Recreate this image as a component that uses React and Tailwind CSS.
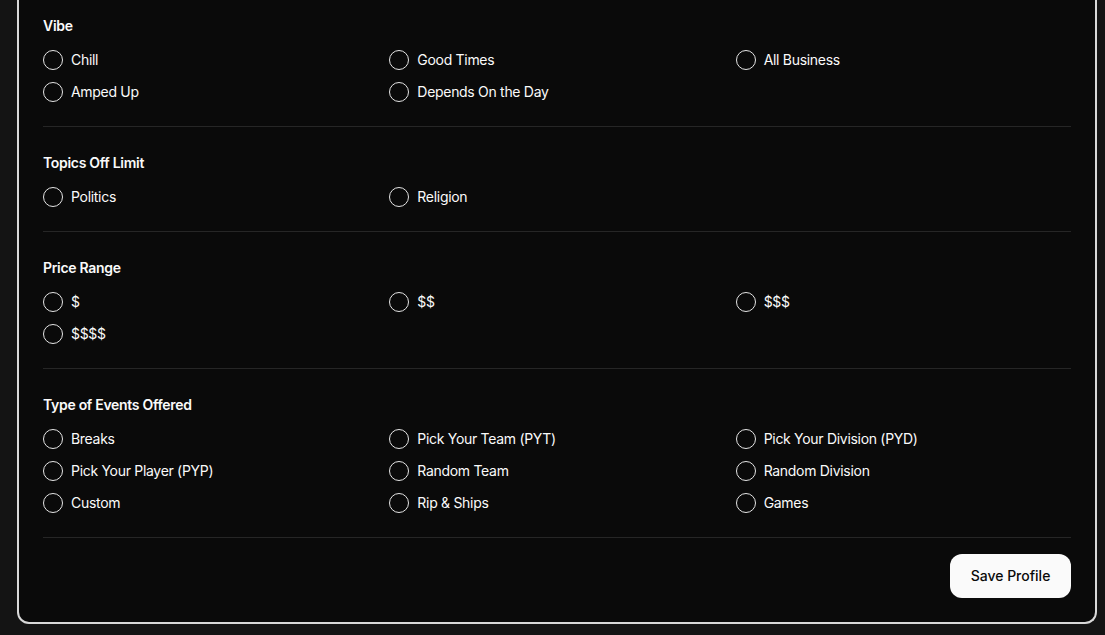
import React from "react";

const sections = [
  { title: "Vibe", options: ["Chill", "Good Times", "All Business", "Amped Up", "Depends On the Day"] },
  { title: "Topics Off Limit", options: ["Politics", "Religion"] },
  { title: "Price Range", options: ["$", "$$", "$$$", "$$$$"] },
  {
    title: "Type of Events Offered",
    options: [
      "Breaks",
      "Pick Your Team (PYT)",
      "Pick Your Division (PYD)",
      "Pick Your Player (PYP)",
      "Random Team",
      "Random Division",
      "Custom",
      "Rip & Ships",
      "Games",
    ],
  },
];

function Radio({ label }) {
  return (
    <label className="flex items-center gap-2 h-5 cursor-pointer">
      <span className="h-5 w-5 shrink-0 rounded-full border-[1.5px] border-[#e5e5e5]" />
      <span className="text-sm tracking-[-0.3px] text-[#fafafa]">{label}</span>
    </label>
  );
}

export default function App() {
  return (
    <div className="min-h-screen bg-[#141414] pl-[17px] pr-2 pb-3 font-['Inter',sans-serif]">
      <div className="rounded-b-xl border-2 border-t-0 border-[#d9d9d9] bg-[#0a0a0a] px-6 pt-[14px] pb-6">
        {sections.map((s) => (
          <div key={s.title} className="border-b border-[#262626] pb-6 pt-6 first:pt-0">
            <h3 className="text-sm font-semibold leading-6 tracking-[-0.3px] text-[#fafafa]">{s.title}</h3>
            <div className="mt-3 grid grid-cols-3 gap-x-[11px] gap-y-3">
              {s.options.map((o) => (
                <Radio key={o} label={o} />
              ))}
            </div>
          </div>
        ))}
        <div className="flex justify-end pt-4">
          <button className="h-11 w-[121px] rounded-xl bg-[#fafafa] text-sm font-medium text-[#0a0a0a]">
            Save Profile
          </button>
        </div>
      </div>
    </div>
  );
}
